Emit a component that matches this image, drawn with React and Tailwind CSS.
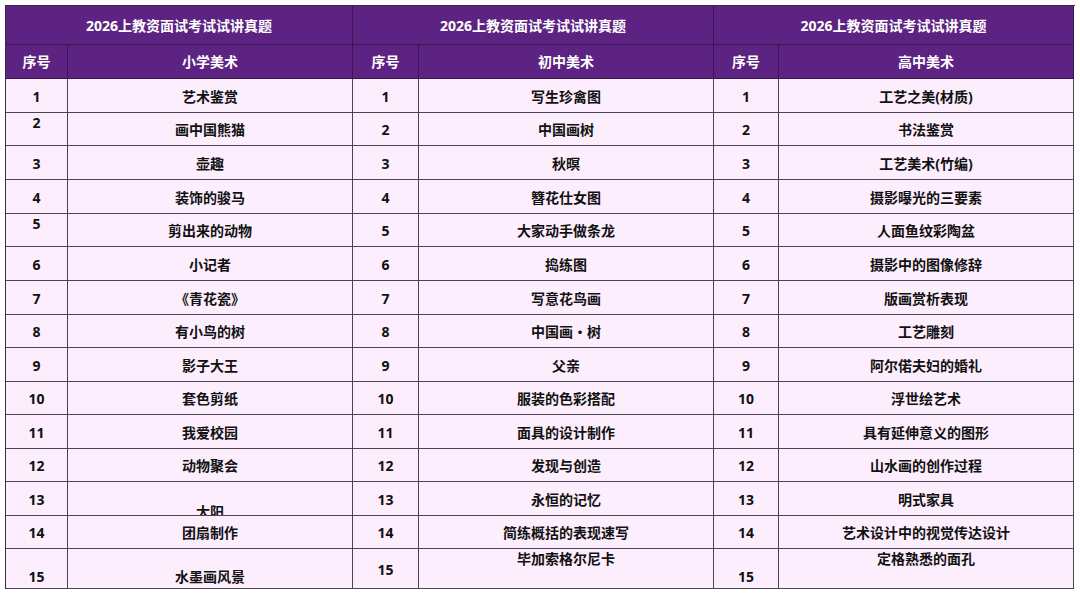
const groups = [
  {
    title: '小学美术',
    items: [
      '艺术鉴赏', '画中国熊猫', '壶趣', '装饰的骏马', '剪出来的动物', '小记者', '《青花瓷》',
      '有小鸟的树', '影子大王', '套色剪纸', '我爱校园', '动物聚会', '太阳', '团扇制作', '水墨画风景',
    ],
  },
  {
    title: '初中美术',
    items: [
      '写生珍禽图', '中国画树', '秋暝', '簪花仕女图', '大家动手做条龙', '捣练图', '写意花鸟画',
      '中国画・树', '父亲', '服装的色彩搭配', '面具的设计制作', '发现与创造', '永恒的记忆',
      '简练概括的表现速写', '毕加索格尔尼卡',
    ],
  },
  {
    title: '高中美术',
    items: [
      '工艺之美(材质)', '书法鉴赏', '工艺美术(竹编)', '摄影曝光的三要素', '人面鱼纹彩陶盆',
      '摄影中的图像修辞', '版画赏析表现', '工艺雕刻', '阿尔偌夫妇的婚礼', '浮世绘艺术',
      '具有延伸意义的图形', '山水画的创作过程', '明式家具', '艺术设计中的视觉传达设计', '定格熟悉的面孔',
    ],
  },
];

const rowHeights = [34, 33, 34, 34, 33, 34, 34, 33, 34, 33, 34, 33, 34, 33, 40];

// odd placements copied from the screenshot
const alignFor = (g, r, cell) => {
  if (g === 0 && cell === 0 && (r === 1 || r === 4)) return 'items-start';
  if (r === 14) {
    if (g === 0) return 'items-end pb-[1px]';
    if (g === 1 && cell === 1) return 'items-start';
    if (g === 2 && cell === 0) return 'items-end pb-[1px]';
    if (g === 2 && cell === 1) return 'items-start';
  }
  return 'items-center pt-[2px]';
};

const Cell = ({ children, align, h, shift }) => (
  <div
    className="border-r border-b border-[#4b4456] bg-[#fdeefd] overflow-hidden"
    style={{ height: h }}
  >
    <div className={`h-full flex justify-center ${align}`}>
      <span className={shift ? 'leading-[20px] translate-y-[12px]' : 'leading-[20px]'}>{children}</span>
    </div>
  </div>
);

export default function App() {
  return (
    <div className="bg-white w-[1080px] h-[594px] p-[5px] pb-0">
      <div
        className="grid border-l border-t border-[#3a2a4a] text-[14px] font-bold text-[#111]"
        style={{ fontFamily: '"Noto Sans", "Noto Sans CJK SC", sans-serif', gridTemplateColumns: '62px 285px 66px 295px 65px 295px' }}
      >
        {groups.map((g, i) => (
          <div
            key={'t' + i}
            className="col-span-2 h-[39px] flex items-center justify-center bg-[#5d2382] text-white border-r border-b border-[#3a1650]"
          >
            2026上教资面试考试试讲真题
          </div>
        ))}
        {groups.map((g, i) => (
          <div key={'h' + i} className="contents">
            <div className="h-[34px] flex items-center justify-center bg-[#5d2382] text-white border-r border-b border-[#3a1650]">
              序号
            </div>
            <div className="h-[34px] flex items-center justify-center bg-[#5d2382] text-white border-r border-b border-[#3a1650]">
              {g.title}
            </div>
          </div>
        ))}
        {rowHeights.map((h, r) =>
          groups.map((g, gi) => (
            <div key={r + '-' + gi} className="contents">
              <Cell h={h} align={alignFor(gi, r, 0)}>{r + 1}</Cell>
              <Cell h={h} align={alignFor(gi, r, 1)} shift={gi === 0 && r === 12}>{g.items[r]}</Cell>
            </div>
          ))
        )}
      </div>
    </div>
  );
}
